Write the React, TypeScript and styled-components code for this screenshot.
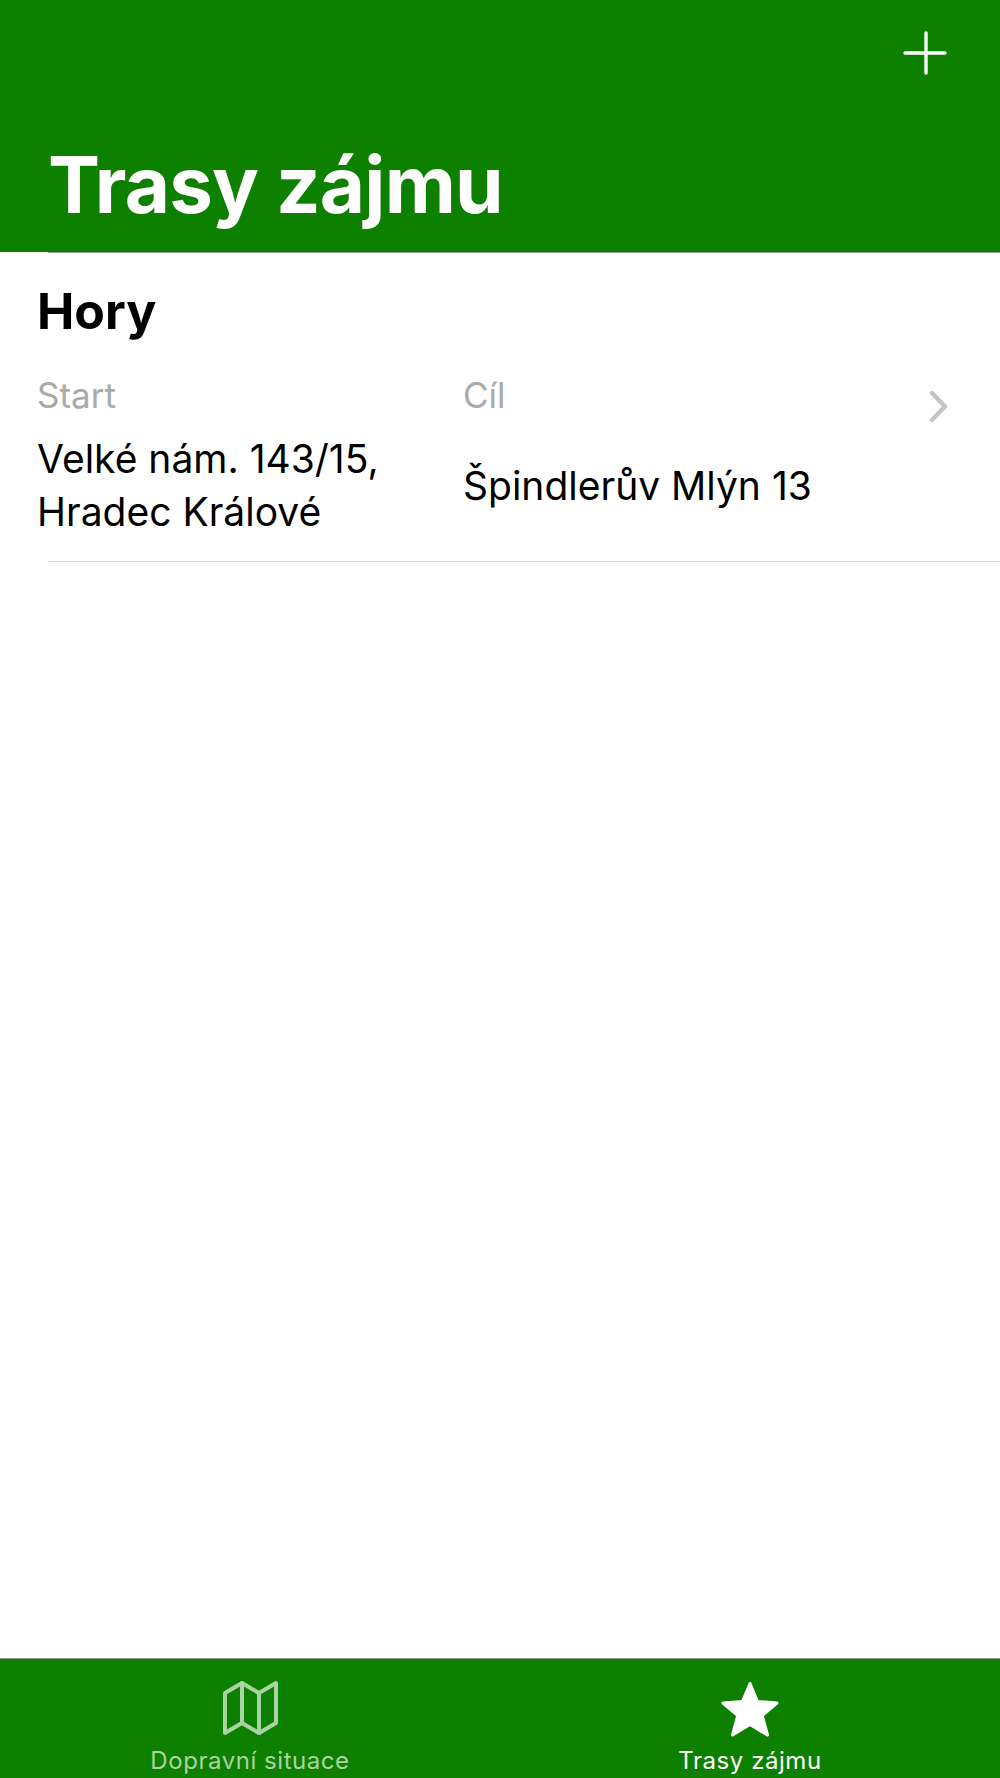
import styled, { createGlobalStyle } from 'styled-components';

const GlobalStyle = createGlobalStyle`
  html, body {
    margin: 0;
    padding: 0;
    background: #fff;
    font-family: Inter, "Noto Sans", sans-serif;
  }
`;

const Screen = styled.div`
  width: 1000px;
  height: 1778px;
  display: flex;
  flex-direction: column;
  overflow: hidden;
`;

const Header = styled.header`
  height: 252px;
  flex: none;
  box-sizing: border-box;
  background: #0d8000;
  padding: 29px 51px 0 48px;
  display: flex;
  flex-direction: column;
`;

const AddButton = styled.svg`
  display: block;
  align-self: flex-end;
  width: 46px;
  height: 48px;
`;

const Title = styled.h1`
  margin: 61px 0 0;
  font-size: 78px;
  line-height: 94px;
  font-weight: 700;
  letter-spacing: -0.8px;
  color: #fff;
`;

const Divider = styled.div`
  height: 1px;
  flex: none;
  background: #9a9a9a;
  margin-left: 48px;
`;

const List = styled.main`
  flex: 1;
`;

const RouteItem = styled.section`
  position: relative;
  padding-top: 28px;
`;

const RouteBody = styled.div`
  padding-left: 37px;
`;

const RouteName = styled.h2`
  margin: 0;
  font-size: 50px;
  line-height: 60px;
  font-weight: 700;
  color: #000;
`;

const Columns = styled.div`
  display: grid;
  grid-template-columns: 426px 1fr;
  margin-top: 33px;
`;

const Place = styled.div`
  display: flex;
  flex-direction: column;
`;

const Label = styled.span`
  font-size: 35px;
  line-height: 42px;
  color: #aaaaaa;
`;

const Address = styled.div`
  height: 106px;
  margin-top: 16px;
  display: flex;
  align-items: center;
  font-size: 39px;
  line-height: 53px;
  color: #000;
`;

const Separator = styled.div`
  height: 1px;
  margin: 23px 0 0 48px;
  background: #d2d2d7;
`;

const Chevron = styled.svg`
  position: absolute;
  right: 50px;
  top: 137px;
  width: 22px;
  height: 33px;
`;

const TabBar = styled.nav`
  height: 119px;
  flex: none;
  display: grid;
  grid-template-columns: 1fr 1fr;
  background: #0d8000;
  border-top: 1px solid #8f9a8c;
`;

const Tab = styled.div<{ $active?: boolean }>`
  display: flex;
  flex-direction: column;
  align-items: center;
  padding-top: 21px;
  color: ${(props) => (props.$active ? '#fff' : '#a9d3a3')};
`;

const TabIcon = styled.svg`
  display: block;
  height: 58px;
  width: 60px;
`;

const TabLabel = styled.span`
  margin-top: 8px;
  font-size: 24px;
  line-height: 30px;
  letter-spacing: 0.55px;
  white-space: nowrap;
`;

export default function App() {
  return (
    <Screen>
      <GlobalStyle />
      <Header>
        <AddButton viewBox="0 0 46 48" fill="none" stroke="#fff" strokeWidth="3.4" strokeLinecap="round">
          <path d="M23 4v40M2 24h40" />
        </AddButton>
        <Title>Trasy zájmu</Title>
      </Header>
      <Divider />
      <List>
        <RouteItem>
          <RouteBody>
            <RouteName>Hory</RouteName>
            <Columns>
              <Place>
                <Label>Start</Label>
                <Address>
                  Velké nám. 143/15,
                  <br />
                  Hradec Králové
                </Address>
              </Place>
              <Place>
                <Label>Cíl</Label>
                <Address>Špindlerův Mlýn 13</Address>
              </Place>
            </Columns>
          </RouteBody>
          <Separator />
          <Chevron viewBox="0 0 22 33" fill="none" stroke="#c4c4c7" strokeWidth="4.4" strokeLinecap="round" strokeLinejoin="round">
            <path d="M4 3l13 13.500L4 30" />
          </Chevron>
        </RouteItem>
      </List>
      <TabBar>
        <Tab>
          <TabIcon viewBox="0 0 60 58" fill="none" stroke="currentColor" strokeWidth="4" strokeLinejoin="round" strokeLinecap="round">
            <path d="M5 13 22 3l17 10 17-10v40L39 53 22 43 5 53z" />
            <path d="M22 3v40M39 13v40" />
          </TabIcon>
          <TabLabel>Dopravní situace</TabLabel>
        </Tab>
        <Tab $active>
          <TabIcon viewBox="0 0 60 58" fill="currentColor" stroke="currentColor" strokeWidth="3" strokeLinejoin="round">
            <path d="M30 3.500 37.500 21.500 57 23 42.200 35.500 47.500 55 30 44.500 12.500 55 17.800 35.500 3 23 22.500 21.500z" />
          </TabIcon>
          <TabLabel>Trasy zájmu</TabLabel>
        </Tab>
      </TabBar>
    </Screen>
  );
}
